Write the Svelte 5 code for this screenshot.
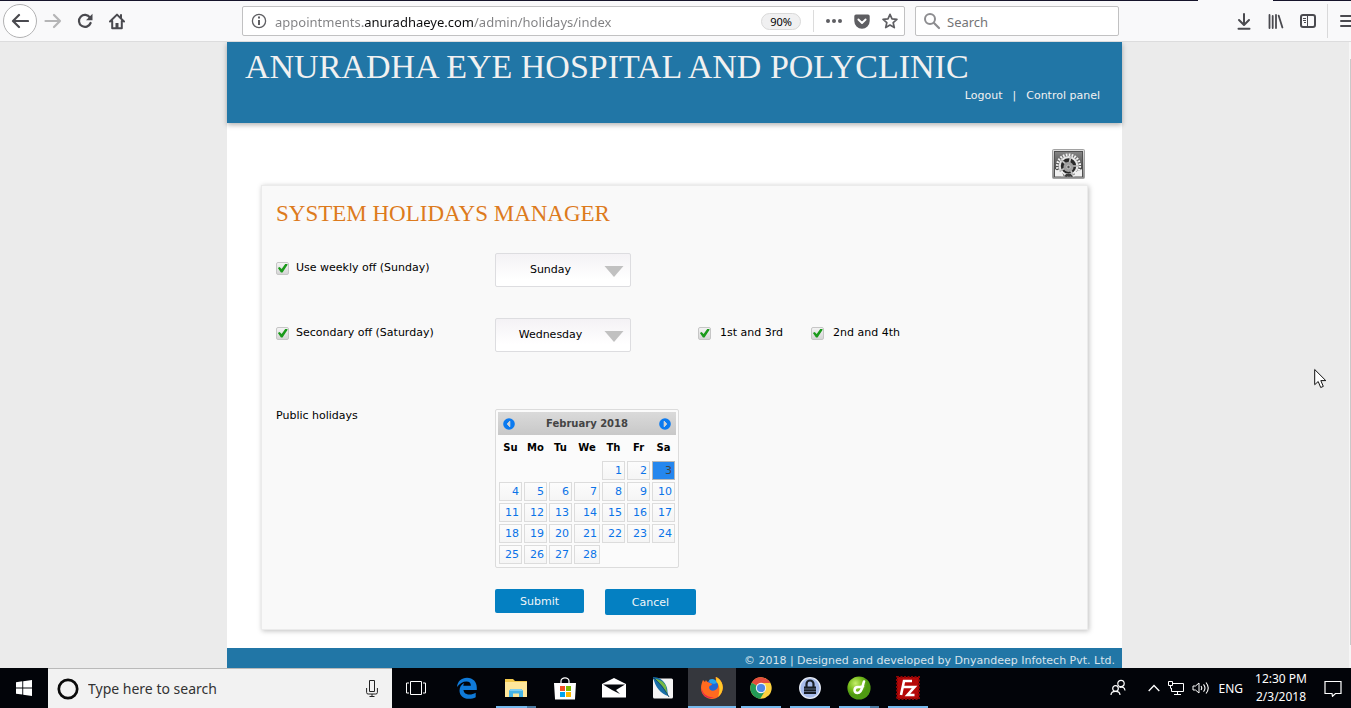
<script>
  const days = ['Sunday', 'Monday', 'Tuesday', 'Wednesday', 'Thursday', 'Friday', 'Saturday'];
  const heads = ['Su', 'Mo', 'Tu', 'We', 'Th', 'Fr', 'Sa'];
  const firstWeekday = 4;
  const monthLength = 28;
  const today = 3;

  const weeks = Array.from({ length: 5 }, (_, w) =>
    Array.from({ length: 7 }, (_, d) => {
      const n = w * 7 + d - firstWeekday + 1;
      return n > 0 && n <= monthLength ? n : null;
    })
  );

  let weekly = $state('Sunday');
  let secondary = $state('Wednesday');
  let useWeekly = $state(true);
  let useSecondary = $state(true);
  let firstThird = $state(true);
  let secondFourth = $state(true);
  let selected = $state(today);
  let address = $state('appointments.anuradhaeye.com/admin/holidays/index');
</script>

<div class="screen">
  <header class="toolbar">
    <div class="tabline"><span></span></div>
    <div class="bar">
      <nav class="nav" aria-label="Browser">
        <button class="back" aria-label="Back">
          <svg width="18" height="16" viewBox="0 0 18 16"><path d="M8 2 2 8l6 6M2.500 8H17" fill="none" stroke="#4a4a4f" stroke-width="2.200" stroke-linecap="round" stroke-linejoin="round" /></svg>
        </button>
        <button class="tool" aria-label="Forward">
          <svg width="18" height="16" viewBox="0 0 18 16"><path d="M10 2l6 6-6 6M1.500 8H16" fill="none" stroke="#b5b5b6" stroke-width="2.200" stroke-linecap="round" stroke-linejoin="round" /></svg>
        </button>
        <button class="tool" aria-label="Reload">
          <svg width="16" height="16" viewBox="0 0 16 16"><path d="M13 4.600A6 6 0 1 0 13.600 10" fill="none" stroke="#4a4a4f" stroke-width="2.200" stroke-linecap="round" /><path d="M15.500.8v6.400H9z" fill="#4a4a4f" /></svg>
        </button>
        <button class="tool" aria-label="Home">
          <svg width="16" height="17" viewBox="0 0 16 17"><path d="M1 8.500 8 1.600l7 6.900M3.200 8v7.300h9.600V8M12 2v3" fill="none" stroke="#4a4a4f" stroke-width="2" stroke-linecap="round" stroke-linejoin="round" /><path d="M6.500 15v-5h3v5z" fill="#4a4a4f" /></svg>
        </button>
      </nav>

      <div class="field url">
        <svg width="16" height="16" viewBox="0 0 16 16"><circle cx="8" cy="8" r="6.600" fill="none" stroke="#5e5e62" stroke-width="1.300" /><path d="M7 3.600h2v2H7zM7 7h2v5H7z" fill="#5e5e62" /></svg>
        <input class="address" aria-label="Address" bind:value={address} />
        <span class="zoom">90%</span>
        <span class="split"></span>
        <button aria-label="Page actions"><svg width="16" height="6" viewBox="0 0 16 6"><circle cx="2" cy="3" r="2" fill="#5e5e62" /><circle cx="8" cy="3" r="2" fill="#5e5e62" /><circle cx="14" cy="3" r="2" fill="#5e5e62" /></svg></button>
        <button aria-label="Save to Pocket"><svg width="16" height="15" viewBox="0 0 16 15"><path d="M2 .5h12a1.700 1.700 0 0 1 1.700 1.700v4.800a7.700 7.700 0 0 1-15.400 0V2.200A1.700 1.700 0 0 1 2 .5z" fill="#5e5e62" /><path d="M4.400 5.500 8 9l3.600-3.500" fill="none" stroke="#fff" stroke-width="1.900" stroke-linecap="round" stroke-linejoin="round" /></svg></button>
        <button aria-label="Bookmark"><svg width="16" height="16" viewBox="0 0 16 16"><path d="M8 1.400l2 4.500 4.900.5-3.700 3.300 1.100 4.900L8 12.100l-4.300 2.500 1.100-4.900L1.100 6.400 6 5.900z" fill="none" stroke="#5e5e62" stroke-width="1.700" stroke-linejoin="round" /></svg></button>
      </div>

      <div class="field find">
        <svg width="18" height="18" viewBox="0 0 18 18"><circle cx="7" cy="7" r="5" fill="none" stroke="#8d8d90" stroke-width="2" /><path d="M11 11l5 5" stroke="#8d8d90" stroke-width="2.200" stroke-linecap="round" /></svg>
        <input aria-label="Search the web" placeholder="Search" />
      </div>

      <div class="extras">
        <button class="tool" aria-label="Downloads"><svg width="14" height="17" viewBox="0 0 14 17"><path d="M7 1v10.500M2 7l5 5 5-5M1.500 15.800h11" fill="none" stroke="#4a4a4f" stroke-width="2" stroke-linecap="round" stroke-linejoin="round" /></svg></button>
        <button class="tool" aria-label="Library"><svg width="16" height="15" viewBox="0 0 16 15"><path d="M1.500 1v13M4.700 2v12M8 1v13M10.700 1.700 14.400 13.500" fill="none" stroke="#4a4a4f" stroke-width="1.800" stroke-linecap="round" /></svg></button>
        <button class="tool" aria-label="Sidebars"><svg width="16" height="14" viewBox="0 0 16 14"><rect x="1" y="1" width="14" height="12" rx="2" fill="none" stroke="#4a4a4f" stroke-width="2" /><path d="M7.500 1v12M3 4.500h3M3 6.500h3M4 8.500h2" stroke="#4a4a4f" stroke-width="1" /></svg></button>
        <span class="rule"></span>
        <button class="menu" aria-label="Menu"><svg width="16" height="14" viewBox="0 0 16 14"><path d="M1 2h14M1 7h14M1 12h14" stroke="#4a4a4f" stroke-width="2" stroke-linecap="round" /></svg></button>
      </div>
    </div>
  </header>

  <div class="viewport">
    <div class="scroller">
      <div class="page">
        <div class="banner">
          <h1>ANURADHA EYE HOSPITAL AND POLYCLINIC</h1>
          <nav class="links" aria-label="Account">
            <a href="#logout">Logout</a><span>|</span><a href="#panel">Control panel</a>
          </nav>
        </div>

        <main>
          <button class="settings" aria-label="Settings">
            <svg width="33" height="31" viewBox="0 0 33 31">
              <defs>
                <linearGradient id="frame" x1="0" y1="0" x2="0" y2="1"><stop offset="0" stop-color="#dedede" /><stop offset="1" stop-color="#8a8a8a" /></linearGradient>
                <linearGradient id="plate" x1="0" y1="0" x2="0" y2="1"><stop offset="0" stop-color="#858585" /><stop offset="1" stop-color="#303030" /></linearGradient>
                <clipPath id="inside"><rect x="3" y="3.500" width="27" height="24" /></clipPath>
              </defs>
              <rect x=".5" y=".5" width="32" height="29" rx="1" fill="url(#frame)" stroke="#a2a2a2" />
              <rect x="2.500" y="2.500" width="28" height="25" fill="url(#plate)" stroke="#505050" />
              <g clip-path="url(#inside)">
                <circle cx="16.500" cy="17" r="11.300" fill="none" stroke="#f2f2f2" stroke-width="2.600" stroke-dasharray="1.700 1.250" />
                <circle cx="16.500" cy="17" r="8.800" fill="#292929" stroke="#e5e5e5" stroke-width="2.200" />
                <path d="M16.500 17 19 7M16.500 17H27M16.500 17 8 22M16.500 17 9 11M16.500 17 21 26" stroke="#bcbcbc" stroke-width="1.700" />
                <circle cx="16.500" cy="18" r="5" fill="#a0a0a0" />
                <circle cx="16.500" cy="18" r="1.700" fill="#555" stroke="#ddd" stroke-width=".7" />
                <path d="M3 20l3 2 1-2 1 3 3-1-1 3 3 3H3zM30 20l-3 2-1-2-1 3-3-1 1 3-3 3h10z" fill="#f0f0f0" />
                <path d="M12 28l2-3h5l2 3z" fill="#3a3a3a" />
              </g>
            </svg>
          </button>

          <form class="card" onsubmit={(e) => e.preventDefault()}>
            <h2>SYSTEM HOLIDAYS MANAGER</h2>

            <div class="row">
              <label class="check"><input type="checkbox" bind:checked={useWeekly} />Use weekly off (Sunday)</label>
              <div class="picker">
                <select aria-label="Weekly off day" bind:value={weekly}>
                  {#each days as day}<option>{day}</option>{/each}
                </select>
                <svg class="arrow" width="20" height="11" viewBox="0 0 20 11"><path d="M.5 0h19L10 11z" fill="#c1c1c1" /></svg>
              </div>
            </div>

            <div class="row second">
              <label class="check"><input type="checkbox" bind:checked={useSecondary} />Secondary off (Saturday)</label>
              <div class="picker">
                <select aria-label="Secondary off day" bind:value={secondary}>
                  {#each days as day}<option>{day}</option>{/each}
                </select>
                <svg class="arrow" width="20" height="11" viewBox="0 0 20 11"><path d="M.5 0h19L10 11z" fill="#c1c1c1" /></svg>
              </div>
              <div class="weeks">
                <label class="check wide"><input type="checkbox" bind:checked={firstThird} />1st and 3rd</label>
                <label class="check wide"><input type="checkbox" bind:checked={secondFourth} />2nd and 4th</label>
              </div>
            </div>

            <div class="row dates">
              <span class="caption">Public holidays</span>
              <div class="calendar">
                <div class="month">
                  <button type="button" aria-label="Previous month"><svg width="12" height="12" viewBox="0 0 12 12"><circle cx="6" cy="6" r="5.800" fill="#0b7af0" /><path d="M6.800 3.200 4.300 6l2.500 2.800z" fill="#d5d5d5" stroke="#d5d5d5" /></svg></button>
                  <strong>February 2018</strong>
                  <button type="button" aria-label="Next month"><svg width="12" height="12" viewBox="0 0 12 12"><circle cx="6" cy="6" r="5.800" fill="#0b7af0" /><path d="M5.200 3.200 7.700 6 5.200 8.800z" fill="#d5d5d5" stroke="#d5d5d5" /></svg></button>
                </div>
                <table>
                  <thead>
                    <tr>{#each heads as head}<th scope="col">{head}</th>{/each}</tr>
                  </thead>
                  <tbody>
                    {#each weeks as week}
                      <tr>
                        {#each week as day}
                          <td>{#if day}<button type="button" class:on={day === selected} onclick={() => (selected = day)}>{day}</button>{/if}</td>
                        {/each}
                      </tr>
                    {/each}
                  </tbody>
                </table>
              </div>
            </div>

            <div class="actions">
              <button type="submit" class="submit">Submit</button>
              <button type="button" class="cancel">Cancel</button>
            </div>
          </form>
        </main>

        <footer>© 2018 | Designed and developed by Dnyandeep Infotech Pvt. Ltd.</footer>
      </div>
    </div>
    <div class="track"><span></span></div>
  </div>

  <div class="taskbar">
    <button class="start" aria-label="Start"><svg width="16" height="16" viewBox="0 0 16 16"><path d="M0 2.300 6.300 1.300V7.500H0zM7.200 1.200 16 0v7.500H7.200zM0 8.500h6.300v6.100L0 13.700zM7.200 8.500H16V16l-8.800-1.200z" fill="#fff" /></svg></button>
    <div class="seek">
      <svg width="24" height="24" viewBox="0 0 24 24"><circle cx="12" cy="12" r="9.200" fill="none" stroke="#0a0a0a" stroke-width="2.700" /></svg>
      <input aria-label="Search this computer" placeholder="Type here to search" />
      <svg width="12" height="17" viewBox="0 0 12 17"><path d="M3.500.5h5v11h-5zM.6 8v4.500q0 1.500 1.500 1.500h7.800q1.500 0 1.500-1.500V8M6 14v2.500M3.500 16.500h5" fill="none" stroke="#222" /></svg>
    </div>
    <button class="task views" aria-label="Task view"><svg width="20" height="16" viewBox="0 0 20 16"><path d="M4.500 1.500h11v13h-11zM3 3H.5v10H3M17 3h2.500v10H17" fill="none" stroke="#fff" /></svg></button>
    <button class="task" aria-label="Edge"><svg width="22" height="22" viewBox="0 0 22 22"><path d="M1 10C1.400 4.500 5.500.8 11 .8c6 0 9.800 4.200 9.800 9.900v2.300H7.500c.2 3 2.700 4.500 5.900 4.500 2.400 0 4.400-.6 6.300-1.800v4.500c-2 1.100-4.300 1.500-6.800 1.500-5.700 0-9.400-3.300-9.400-8.300 0-3.300 1.800-6 4.800-7.500-.6.9-.9 1.700-1 2.800h7.600c0-2.600-1.500-4.200-4.400-4.200C6.900 4.500 3.500 6.500 1 10z" fill="#0f7ad8" /></svg></button>
    <button class="task open stack" aria-label="Explorer"><svg width="22" height="20" viewBox="0 0 22 20"><path d="M0 1h8l2 2h12v16H0z" fill="#f3c84b" /><path d="M0 4h22v15H0z" fill="#ffe79b" /><path d="M4 19v-6.500L6 11h10l2 1.500V19h-4v-3.500H8V19z" fill="#46b5e8" /><path d="M6 11h10l2 2H4z" fill="#7fd0f2" /></svg></button>
    <button class="task" aria-label="Store"><svg width="24" height="23" viewBox="0 0 24 23"><path d="M8 6V4a4 3.200 0 0 1 8 0v2" fill="none" stroke="#fff" stroke-width="1.200" /><path d="M1 6h22l-1 16.500H2z" fill="#fff" /><path d="M7 9h5v5H7z" fill="#f25022" /><path d="M13 9h5v5h-5z" fill="#7fba00" /><path d="M7 15h5v5H7z" fill="#00a4ef" /><path d="M13 15h5v5h-5z" fill="#ffb900" /></svg></button>
    <button class="task" aria-label="Mail"><svg width="24" height="20" viewBox="0 0 24 20"><path d="M0 6 12 0l12 6v13.500H0z" fill="#fff" /><path d="M1 6.500h22L14 12l4 4-8-4z" fill="#05070c" /></svg></button>
    <button class="task" aria-label="Notes"><svg width="22" height="22" viewBox="0 0 22 22"><rect x="1" y="1.500" width="20" height="20" rx="1.500" fill="#f4f4f4" /><path d="M1 0C6 0 13 3 15 11c.6 3 .5 5 1 8C9 17 3 10 1 0z" fill="#176fa8" /><path d="M3 2c5 4 9 8 12.500 16L14 9C11 4 7 2 3 2z" fill="#75b843" /><path d="M2 1c5 5 10 10 15 19" fill="none" stroke="#174b68" /></svg></button>
    <button class="task open active" aria-label="Firefox"><svg width="24" height="24" viewBox="0 0 24 24"><circle cx="12.500" cy="12" r="8" fill="#2367d6" /><path d="M9 4c3-2 7-1 8 3l-3 1-4-1z" fill="#27a4ec" /><path d="M3 4l2 2 1-2c.5 2 2.500 2.500 4 3l2 1c0 1.500-2.500 1.500-3 3 0 5 7 5 9 0 .5-3-.5-5-2-6l-.5-4C20 2 23 7 22.800 12 22.500 18.500 17.500 23 12 23S1 19 1 12c0-3 1-6 2-8z" fill="#ff6a1f" /><path d="M16 1c4 2 7 6 6.800 11-.4 4-2.300 7-4.800 9 2-5 2-12-1.500-15z" fill="#ffc928" /><path d="M1.500 11C2 18 7 21.500 14 21c-6 3-13-1-12.500-10z" fill="#e5244d" /></svg></button>
    <button class="task open" aria-label="Chrome"><svg width="22" height="22" viewBox="0 0 22 22"><circle cx="11" cy="11" r="10.700" fill="#fdd23f" /><path d="M11 11 1.700 5.700A10.700 10.700 0 0 1 20.400 6H11z" fill="#e34c3d" /><path d="M1.700 5.700A10.700 10.700 0 0 0 10.200 21.700L15.300 13.500 11 11z" fill="#239b57" /><path d="M11 6h9.400L15.500 13.500z" fill="#fdd23f" /><circle cx="11" cy="11" r="5.200" fill="#f2f2f2" /><circle cx="11" cy="11" r="4.100" fill="#4c88e8" /></svg></button>
    <button class="task open" aria-label="KeePass"><svg width="22" height="22" viewBox="0 0 22 22"><circle cx="11" cy="11" r="10.300" fill="#a7bbea" stroke="#e6ebf5" stroke-width="1.300" /><path d="M7.500 10V7a3.500 3.500 0 0 1 7 0v3" fill="none" stroke="#1a2028" stroke-width="2.200" /><path d="M5 9.500h12V17H5z" fill="#171c24" /><path d="M5 12h12M5 14.500h12" stroke="#71819d" stroke-width=".7" /></svg></button>
    <button class="task open stack" aria-label="Dreamweaver"><svg width="24" height="24" viewBox="0 0 24 24"><defs><radialGradient id="lime" cx=".35" cy=".3"><stop offset="0" stop-color="#c5ee6c" /><stop offset=".6" stop-color="#79bd1d" /><stop offset="1" stop-color="#4f9a12" /></radialGradient></defs><circle cx="12" cy="12" r="11.600" fill="url(#lime)" /><path d="M17 5.500c-1.500 3-1.500 11.500-6.500 11.500-4 0-4-6 .5-6 2 0 3.500.2 5-.5" fill="none" stroke="#fff" stroke-width="2.600" stroke-linecap="round" /></svg></button>
    <button class="task open" aria-label="FileZilla"><svg width="24" height="24" viewBox="0 0 24 24"><rect x="1" y="1" width="22" height="22" fill="#b50808" stroke="#8c0505" stroke-width="2" stroke-dasharray="2 1.500" /><path d="M5 19 8 5h8M7 11h6M11.500 11h7l-7 8h7" fill="none" stroke="#fff" stroke-width="2.600" /></svg></button>

    <div class="tray">
      <svg width="16" height="18" viewBox="0 0 16 18"><circle cx="11" cy="4.500" r="3.200" fill="none" stroke="#fff" stroke-width="1.200" /><circle cx="5.500" cy="9.500" r="2.800" fill="none" stroke="#fff" stroke-width="1.200" /><path d="M1 16q0-3.700 4.500-3.700T10 16M9.500 8.500q5-1.500 5.500 3" fill="none" stroke="#fff" stroke-width="1.200" /></svg>
      <svg class="up" width="12" height="8" viewBox="0 0 12 8"><path d="M.7 7 6 1.500 11.300 7" fill="none" stroke="#fff" stroke-width="1.300" /></svg>
      <svg width="16" height="14" viewBox="0 0 16 14"><path d="M5 2.500h10.500v8H3.500V7M6 13.500h7M9.500 10.500v3M.5.500h4v4h-4zM2.500 4.500v3" fill="none" stroke="#fff" /></svg>
      <svg width="18" height="14" viewBox="0 0 18 14"><path d="M1 5h2.500L7 2v10L3.500 9H1z" fill="none" stroke="#fff" /><path d="M9 5q1.500 2 0 4M11.500 3.300q3 3.700 0 7.400M14 1.500q4.500 5.500 0 11" fill="none" stroke="#fff" stroke-width="1.100" /></svg>
      <span class="lang">ENG</span>
      <div class="clock"><span>12:30 PM</span><span>2/3/2018</span></div>
      <svg width="18" height="17" viewBox="0 0 18 17"><path d="M1 1.500h16v12h-5.500l-3 2.800-.5-2.800H1z" fill="none" stroke="#fff" stroke-width="1.200" /></svg>
    </div>
  </div>

  <svg class="pointer" width="13" height="21" viewBox="0 0 13 21"><path d="M.7 1.500v15.200L4.200 13.500l2.500 6 2.600-1.100-2.500-5.800h5z" fill="#fff" stroke="#111" /></svg>
</div>

<style>
  :global(body) {
    margin: 0;
    background: #ebebeb;
  }

  .screen {
    display: flex;
    flex-direction: column;
    height: 100vh;
    overflow: hidden;
    position: relative;
    font-family: 'DejaVu Sans', Verdana, sans-serif;
    font-size: 11px;
    color: #000;
  }

  .screen * {
    box-sizing: border-box;
  }

  button,
  input,
  select {
    font: inherit;
    color: inherit;
    border: 0;
    padding: 0;
    margin: 0;
    background: none;
    border-radius: 0;
  }

  svg {
    display: block;
    flex: none;
  }

  .toolbar {
    flex: none;
    background: #f9f9fa;
    border-bottom: 1px solid #dcdcdd;
    font-family: 'Noto Sans', 'Open Sans', sans-serif;
    overflow: hidden;
  }

  .tabline {
    display: flex;
    justify-content: flex-end;
    height: 1px;
    padding-right: 78px;
    background: #16142b;
  }

  .tabline span {
    width: 75px;
    background: #f9f9fa;
  }

  .bar {
    display: flex;
    align-items: center;
    height: 40px;
  }

  .nav {
    display: flex;
    align-items: center;
    flex: none;
    width: 242px;
    padding-left: 3px;
  }

  .back {
    display: grid;
    place-items: center;
    width: 34px;
    height: 34px;
    border: 1px solid #b2b2b3;
    border-radius: 50%;
    background: #fff;
  }

  .tool {
    display: grid;
    place-items: center;
    width: 32px;
    height: 32px;
  }

  .field {
    display: flex;
    align-items: center;
    height: 30px;
    min-width: 0;
    border: 1px solid #c1c1c2;
    border-radius: 2px;
    background: #fff;
    font-size: 13px;
  }

  .field input {
    flex: 1;
    min-width: 0;
    height: 24px;
    padding-top: 2px;
    outline: 0;
  }

  .url {
    flex: 1;
    padding: 0 6px 0 8px;
    gap: 12px;
  }

  .address {
    margin-left: -4px;
    color: transparent;
    caret-color: #111;
    background: linear-gradient(90deg, #808082 88px, #0c0c0d 88px, #0c0c0d 198px, #808082 198px);
    background-clip: text;
    -webkit-background-clip: text;
  }

  .zoom {
    padding: 0 8px;
    border: 1px solid #d9d9d9;
    border-radius: 9px;
    background: #f0f0f1;
    font-size: 11px;
    line-height: 15px;
  }

  .split {
    width: 1px;
    height: 22px;
    background: #dcdcdc;
  }

  .find {
    flex: none;
    width: 204px;
    margin: 0 109px 0 10px;
    padding-left: 7px;
    gap: 6px;
  }

  .find input::placeholder {
    color: #747476;
    opacity: 1;
  }

  .extras {
    display: flex;
    align-items: center;
    flex: none;
    width: 123px;
    overflow: hidden;
  }

  .rule {
    flex: none;
    width: 1px;
    height: 34px;
    margin: 0 12px 0 3px;
    background: #d9d9da;
  }

  .extras .tool,
  .menu {
    flex: none;
  }

  .viewport {
    display: flex;
    flex: 1;
    min-height: 0;
    background: #ebebeb;
  }

  .scroller {
    flex: 1;
    overflow-y: auto;
    scrollbar-width: none;
  }

  .track {
    width: 2px;
    padding: 17px 0 23px 1px;
    background: #f6f6f6;
    display: flex;
  }

  .track span {
    flex: 1;
    background: #c9c9c9;
  }

  .page {
    max-width: 895px;
    margin: 0 auto;
    background: #fff;
  }

  .banner {
    height: 81px;
    padding: 0 22px 0 18px;
    background: #2176a6;
    box-shadow: 0 2px 5px rgba(0, 0, 0, 0.3);
    color: #f1f1f1;
  }

  h1,
  h2 {
    margin: 0;
    font-family: 'Liberation Serif', 'Times New Roman', serif;
    font-weight: 400;
    white-space: nowrap;
  }

  h1 {
    padding-top: 5px;
    font-size: 34px;
    line-height: 40px;
  }

  .links {
    display: flex;
    justify-content: flex-end;
    gap: 10px;
    padding-top: 1px;
    line-height: 16px;
  }

  .links a {
    color: inherit;
    text-decoration: none;
  }

  main {
    display: flex;
    flex-direction: column;
    padding: 26px 34px 18px;
  }

  .settings {
    align-self: flex-end;
    margin-right: 3px;
  }

  .card {
    margin-top: 5px;
    padding: 14px;
    border: 1px solid #ebebeb;
    background: #f9f9f9;
    box-shadow: 1px 1px 5px rgba(0, 0, 0, 0.25);
  }

  h2 {
    font-size: 23px;
    line-height: 28px;
    color: #dd7b1d;
  }

  .row {
    display: grid;
    grid-template-columns: 219px 203px 1fr;
    align-items: start;
    margin-top: 25px;
    line-height: 14px;
  }

  .row.second {
    margin-top: 31px;
  }

  .row.dates {
    margin-top: 57px;
  }

  .check {
    display: flex;
    align-items: center;
    gap: 7px;
    padding-top: 8px;
  }

  .check.wide {
    gap: 9px;
  }

  .check input {
    appearance: none;
    display: grid;
    place-items: center;
    flex: none;
    width: 13px;
    height: 13px;
    border: 1px solid #c6c6c6;
    border-radius: 2px;
    background: linear-gradient(#f3f3f3, #d5d5d5);
  }

  .check input:checked::before {
    content: '';
    width: 11px;
    height: 9px;
    background: #1b9a1b;
    clip-path: polygon(8% 50%, 24% 38%, 42% 60%, 78% 0, 98% 10%, 50% 100%, 36% 100%);
  }

  .picker {
    position: relative;
    width: 136px;
  }

  select {
    appearance: none;
    width: 100%;
    height: 34px;
    padding-right: 25px;
    border: 1px solid #dddde0;
    border-radius: 2px;
    background: linear-gradient(#f4f2f5, #fff 80%);
    text-align: center;
    text-align-last: center;
  }

  .arrow {
    position: absolute;
    right: 7px;
    top: 13px;
    pointer-events: none;
  }

  .weeks {
    display: flex;
    gap: 28px;
  }

  .caption {
    white-space: nowrap;
  }

  .calendar {
    width: 184px;
    padding: 2px 2px 1px;
    border: 1px solid #dcdcdc;
    border-radius: 2px;
    background: #fbfbfb;
  }

  .month {
    display: flex;
    align-items: center;
    justify-content: space-between;
    height: 23px;
    padding: 0 5px;
    background: linear-gradient(#dadada, #c8c8c8);
    color: #444;
    font-size: 10px;
  }

  table {
    width: calc(100% + 2px);
    margin: 0 -1px;
    table-layout: fixed;
    border-spacing: 2px;
  }

  th {
    height: 22px;
    padding: 0;
    font-size: 10px;
    font-weight: 700;
    line-height: 14px;
  }

  th:nth-child(4) {
    width: 26px;
  }

  td {
    height: 19px;
    padding: 0;
  }

  td button {
    display: block;
    width: 100%;
    height: 19px;
    padding-right: 2px;
    border: 1px solid #dcdcdc;
    background: linear-gradient(#fcfcfc, #f5f5f5);
    color: #0a73e8;
    line-height: 16px;
    text-align: right;
  }

  td button.on {
    border-color: #b8b8b8;
    background: #2587ee;
    color: #444;
  }

  .actions {
    display: flex;
    align-items: flex-start;
    gap: 21px;
    margin: 21px 0 0 219px;
  }

  .actions button {
    border-radius: 2px;
    background: #0480c2;
    color: #f1f5f8;
  }

  .submit {
    width: 89px;
    height: 24px;
  }

  .cancel {
    width: 91px;
    height: 26px;
  }

  footer {
    padding: 5px 7px;
    background: #2176a6;
    color: #d8e4ec;
    line-height: 16px;
    text-align: right;
  }

  .taskbar {
    display: flex;
    flex: none;
    height: 40px;
    background: #020409;
    color: #fff;
    font-family: 'Noto Sans', 'Open Sans', sans-serif;
  }

  .start {
    display: grid;
    place-items: center;
    width: 48px;
  }

  .seek {
    display: flex;
    align-items: center;
    width: 344px;
    padding: 0 14px 0 8px;
    gap: 8px;
    border-top: 1px solid #b9b9b9;
    background: #f2f2f2;
    color: #2b2b2b;
    font-size: 14px;
  }

  .seek input {
    flex: 1;
    min-width: 0;
    outline: 0;
  }

  .seek input::placeholder {
    color: #333;
    opacity: 1;
  }

  .task {
    position: relative;
    display: grid;
    place-items: center;
    width: 48px;
    margin-right: 1px;
  }

  .task.views {
    margin-right: 3px;
  }

  .task.open::after {
    content: '';
    position: absolute;
    left: 4px;
    right: 4px;
    bottom: 0;
    height: 2px;
    background: #76b9ed;
  }

  .task.stack::after {
    background: linear-gradient(90deg, #76b9ed 31px, #4c7ba2 31px);
  }

  .task.active {
    background: #35373d;
  }

  .task.active::after {
    left: 0;
    right: 0;
  }

  .tray {
    display: flex;
    align-items: center;
    margin-left: auto;
    padding-right: 9px;
    gap: 8px;
    font-size: 12px;
  }

  .up {
    margin-left: 14px;
  }

  .clock {
    display: flex;
    flex-direction: column;
    align-items: center;
    width: 60px;
    margin-right: 5px;
    line-height: 18px;
    white-space: nowrap;
  }

  .pointer {
    position: absolute;
    top: 368px;
    right: 24px;
    pointer-events: none;
  }
</style>
